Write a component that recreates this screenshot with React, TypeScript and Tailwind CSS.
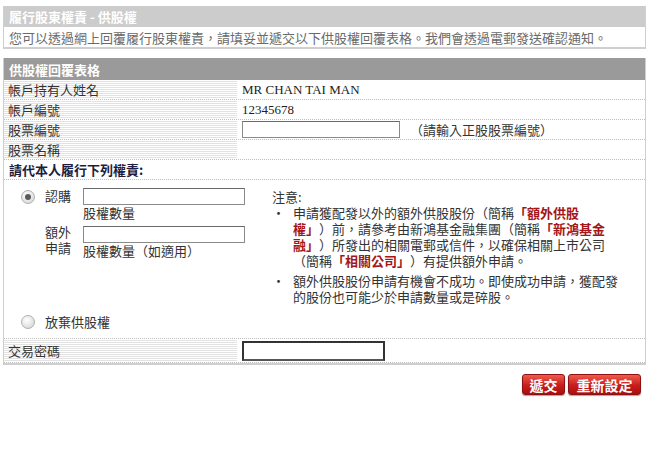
import React from "react";

const FONT = "font-['Noto_Sans_CJK_TC','Noto_Sans',sans-serif]";

function Radio({ checked }: { checked?: boolean }) {
  return (
    <span className="flex h-[14px] w-[14px] shrink-0 items-center justify-center rounded-full border border-[#b0b0b0] bg-[radial-gradient(circle_at_40%_35%,#ffffff,#d0d0d0)]">
      {checked && <span className="h-[6px] w-[6px] rounded-full bg-[#5a5a5a]" />}
    </span>
  );
}

function Row({ label, children, tall }: { label: string; children?: React.ReactNode; tall?: boolean }) {
  return (
    <div className={`flex border-b border-dotted border-[#bdbdbd] ${tall ? "h-[24px]" : "h-[20px]"}`}>
      <div className="flex w-[233px] items-center bg-[repeating-linear-gradient(to_bottom,#ffffff_0px,#ffffff_1px,#e2e2e2_1px,#e2e2e2_2px)] pl-[4px] leading-none text-[#333]">
        {label}
      </div>
      <div className="flex flex-1 items-center pl-[5px]">{children}</div>
    </div>
  );
}

function Em({ children }: { children: React.ReactNode }) {
  return <span className="inline-block font-bold leading-[16px] text-[#a3161a]">{children}</span>;
}

export default function App() {
  return (
    <div className={`h-[462px] w-[650px] bg-white text-[13px] ${FONT}`}>
      <div className="ml-[3px] w-[643px] pt-[6px]">
        {/* Intro */}
        <div className="border-x border-b-2 border-[#cfcfcf]">
          <div className="flex h-[21px] items-center bg-[#cccccc] pl-[5px] text-[13px] font-bold leading-none text-white">
            履行股東權責 - 供股權
          </div>
          <div className="flex h-[20px] items-center pl-[5px] leading-none text-[#6a6a6a]">
            您可以透過網上回覆履行股東權責，請填妥並遞交以下供股權回覆表格。我們會透過電郵發送確認通知。
          </div>
        </div>

        {/* Form */}
        <div className="mt-[9px] border-x border-b-2 border-[#cfcfcf]">
          <div className="flex h-[22px] items-center bg-[#9a9a9a] pl-[5px] font-bold leading-none text-white">
            供股權回覆表格
          </div>
          <Row label="帳戶持有人姓名">
            <span className="font-['Liberation_Serif',serif] text-[13px] text-[#222]">MR CHAN TAI MAN</span>
          </Row>
          <Row label="帳戶編號">
            <span className="font-['Liberation_Serif',serif] text-[13px] text-[#222]">12345678</span>
          </Row>
          <Row label="股票編號">
            <input className="h-[17px] w-[158px] border border-[#8a8a8a] border-t-[#6a6a6a] bg-white" />
            <span className="ml-[10px] leading-none text-[#333]">（請輸入正股股票編號）</span>
          </Row>
          <Row label="股票名稱" />
          <div className="flex h-[20px] items-center border-b border-dotted border-[#bdbdbd] pl-[5px] font-bold leading-none text-[#1d1d3f]">
            請代本人履行下列權責:
          </div>

          {/* Options */}
          <div className="flex border-b border-dotted border-[#bdbdbd] pb-[8px] pt-[8px] leading-[16px] text-[#333]">
            <div className="w-[268px] pl-[17px]">
              <div className="flex items-start">
                <div className="mt-[2px]">
                  <Radio checked />
                </div>
                <div className="ml-[10px] w-[38px]">認購</div>
                <div className="flex flex-col">
                  <input className="h-[17px] w-[162px] border border-[#8a8a8a] border-t-[#6a6a6a] bg-white" />
                  <span>股權數量</span>
                </div>
              </div>
              <div className="mt-[5px] flex items-start">
                <div className="w-[14px]" />
                <div className="ml-[10px] mt-[-2px] flex w-[38px] flex-col">
                  <span className="h-[16px]">額外</span>
                  <span className="h-[16px]">申請</span>
                </div>
                <div className="flex flex-col">
                  <input className="h-[17px] w-[162px] border border-[#8a8a8a] border-t-[#6a6a6a] bg-white" />
                  <span>股權數量（如適用）</span>
                </div>
              </div>
              <div className="mt-[55px] flex items-center">
                <Radio />
                <span className="ml-[10px]">放棄供股權</span>
              </div>
            </div>

            <div className="flex-1 pt-[1px]">
              <div>注意:</div>
              <ul>
                <li className="flex">
                  <span className="w-[21px]">•</span>
                  <span className="whitespace-nowrap">
                    申請獲配發以外的額外供股股份（簡稱<Em>「額外供股</Em>
                    <br />
                    <Em>權」</Em>）前，請參考由新鴻基金融集團（簡稱<Em>「新鴻基金</Em>
                    <br />
                    <Em>融」</Em>）所發出的相關電郵或信件，以確保相關上市公司
                    <br />
                    （簡稱<Em>「相關公司」</Em>）有提供額外申請。
                  </span>
                </li>
                <li className="mt-[4px] flex">
                  <span className="w-[21px]">•</span>
                  <span className="whitespace-nowrap">
                    額外供股股份申請有機會不成功。即使成功申請，獲配發
                    <br />
                    的股份也可能少於申請數量或是碎股。
                  </span>
                </li>
              </ul>
            </div>
          </div>

          <Row label="交易密碼" tall>
            <input type="password" className="h-[20px] w-[143px] border-2 border-[#333] border-b-[#555] bg-white" />
          </Row>
        </div>

        {/* Actions */}
        <div className="mt-[9px] flex justify-end gap-[3px] pr-[5px]">
          <button className="h-[21px] w-[43px] rounded-[3px] border border-[#8e1010] bg-[linear-gradient(to_bottom,#ef5a4a,#c81d1d_55%,#a81010)] text-[14px] font-bold leading-none text-white shadow-[0_1px_1px_rgba(0,0,0,0.35)]">
            遞交
          </button>
          <button className="h-[21px] w-[73px] rounded-[3px] border border-[#8e1010] bg-[linear-gradient(to_bottom,#ef5a4a,#c81d1d_55%,#a81010)] text-[14px] font-bold leading-none text-white shadow-[0_1px_1px_rgba(0,0,0,0.35)]">
            重新設定
          </button>
        </div>
      </div>
    </div>
  );
}
